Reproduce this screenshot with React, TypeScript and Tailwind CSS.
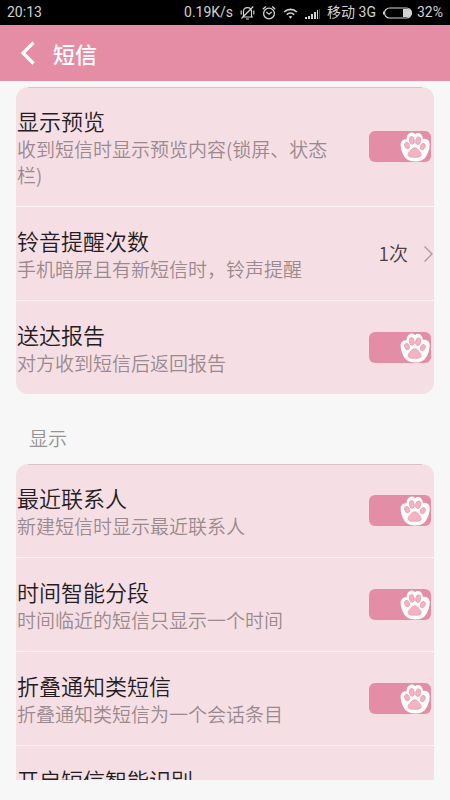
import { useId, useState } from "react";

type Item = {
  title: string;
  summary?: string;
  value?: string;
};

const notifyItems: Item[] = [
  { title: "显示预览", summary: "收到短信时显示预览内容(锁屏、状态栏)" },
  { title: "铃音提醒次数", summary: "手机暗屏且有新短信时，铃声提醒", value: "1次" },
  { title: "送达报告", summary: "对方收到短信后返回报告" },
];

const displayItems: Item[] = [
  { title: "最近联系人", summary: "新建短信时显示最近联系人" },
  { title: "时间智能分段", summary: "时间临近的短信只显示一个时间" },
  { title: "折叠通知类短信", summary: "折叠通知类短信为一个会话条目" },
  { title: "开启短信智能识别" },
];

function StatusBar() {
  return (
    <div className="flex h-[25px] shrink-0 items-center justify-between bg-black px-[7px] font-[Roboto,'Noto_Sans_CJK_SC',sans-serif] text-[14px] text-[#d2d2d2]">
      <span>20:13</span>
      <div className="flex items-center gap-[7px]">
        <span>0.19K/s</span>
        <svg width="15" height="16" viewBox="0 0 15 16" fill="none" stroke="currentColor" strokeWidth="1.2" aria-hidden="true">
          <path d="M2 12h11M3.500 12V6.500C3.500 4 5.100 2.600 7.500 2.600S11.500 4 11.500 6.500V12M6 14h3M13.300 1.500 1.500 13.500M13.800 5.500v4M1.200 5.500v4" />
        </svg>
        <svg width="14" height="16" viewBox="0 0 14 16" fill="none" stroke="currentColor" strokeWidth="1.3" aria-hidden="true">
          <circle cx="7" cy="8.500" r="5.400" />
          <path d="M4.300 7 7 9.200 9.800 7M.8 4.300 3.800 1.600M13.200 4.300l-3-2.700" />
        </svg>
        <svg width="15" height="12" viewBox="0 0 15 12" fill="none" stroke="currentColor" strokeWidth="1.700" aria-hidden="true">
          <path d="M1.200 5C4.800 1.400 10.200 1.400 13.800 5M3.800 7.600c2.100-2 5.300-2 7.400 0" />
          <path d="M5.600 9.600c1.200-.9 2.600-.9 3.800 0L7.500 11.700Z" fill="currentColor" stroke="none" />
        </svg>
        <svg width="15" height="12" viewBox="0 0 15 12" fill="currentColor" aria-hidden="true">
          <path d="M0 10h2v2H0zM3 9h2v3H3zM6 7h2v5H6zM9 5h2v7H9zM12 3h1v9h-1z" />
          <path d="M14 2h1v10h-1z" fill="#444" />
        </svg>
        <span>移动 3G</span>
        <div className="flex items-center gap-1">
          <svg width="30" height="12" viewBox="0 0 30 12" aria-hidden="true">
            <rect x="1.500" y="1" width="27" height="10" rx="5" fill="none" stroke="currentColor" strokeWidth="1.200" />
            <path d="M20 2h4.500a4 4 0 0 1 0 8H20z" fill="currentColor" />
            <path d="M0 4.500h1v3H0z" fill="currentColor" />
          </svg>
          <span>32%</span>
        </div>
      </div>
    </div>
  );
}

function Paw() {
  return (
    <svg className="pointer-events-none col-start-1 row-start-1 mr-px justify-self-end" width="30" height="30" viewBox="0 0 30 30" aria-hidden="true">
      <path
        d="M10.500.8C12.500.2 14 1 15 2.200 16.500.4 19.500.6 21.200 2.400c1.100 1.200 1.700 2.800 1.600 4.600 2.700-.7 5.200.2 6.300 2.600.9 2.200.7 4.800 0 7.400-.5 2.500-1.600 5-3.100 7.600-1.900 3.300-5.600 5-10.400 5-4.800 0-8.700-1.300-11-4.600C2.300 21.800.8 17.200.6 13 .5 9.300 3 6.700 6.600 7.200 6.400 4.200 7.800 1.700 10.500.8Z"
        fill="#fff"
      />
      <g fill="#f4b3c1" stroke="#e99fb2" strokeWidth=".8">
        <ellipse cx="11.800" cy="8.400" rx="2.500" ry="3.900" transform="rotate(-10 11.800 8.400)" />
        <ellipse cx="18.200" cy="8.700" rx="2.500" ry="3.900" transform="rotate(12 18.200 8.700)" />
        <ellipse cx="7" cy="13.600" rx="2.300" ry="3.300" transform="rotate(-22 7 13.600)" />
        <ellipse cx="22.800" cy="14.600" rx="2.300" ry="3.300" transform="rotate(26 22.800 14.600)" />
        <path d="M14.800 15.800c2.400 0 3.300 1.900 4.500 3.400 1.400 1.500 2.200 2.700 1.800 4-.6 2-3 2.100-6.300 2-3.500.1-6.100 0-6.700-2-.4-1.400.5-2.600 1.900-4 1.300-1.500 2.300-3.400 4.800-3.400Z" />
      </g>
    </svg>
  );
}

function RowText({ title, summary }: Item) {
  return (
    <span className="flex w-80 min-w-0 shrink flex-col text-left">
      <span className="text-[22px] leading-[31px] font-[350] text-[#241c1f]">{title}</span>
      {summary && (
        <span className="text-[19px] leading-[26px] font-[350] text-[#9a898f]">{summary}</span>
      )}
    </span>
  );
}

const rowClass =
  "flex w-full items-center justify-between border-b border-[#fcf3f5] py-[18px] pl-px last:border-b-0";

function SwitchRow({ item }: { item: Item }) {
  const id = useId();
  const [on, setOn] = useState(true);

  return (
    <label htmlFor={id} className={rowClass}>
      <RowText {...item} />
      <span className="mr-[3px] grid shrink-0 items-center">
        <input
          id={id}
          type="checkbox"
          checked={on}
          onChange={(e) => setOn(e.target.checked)}
          className="col-start-1 row-start-1 h-[31px] w-[62px] appearance-none rounded-md bg-[#d3c4c8] checked:bg-[#e48da6]"
        />
        <Paw />
      </span>
    </label>
  );
}

function LinkRow({ item }: { item: Item }) {
  return (
    <button type="button" className={rowClass}>
      <RowText {...item} />
      {item.value && (
        <span className="flex shrink-0 items-center gap-4 text-[19px] font-[350] text-[#4a3f43]">
          {item.value}
          <svg width="10" height="18" viewBox="0 0 10 18" fill="none" stroke="#a8999e" strokeWidth="1.300" aria-hidden="true">
            <path d="M.5 1.500 8 9 .5 16.500" />
          </svg>
        </span>
      )}
    </button>
  );
}

function Card({ items }: { items: Item[] }) {
  return (
    <div className="rounded-xl bg-[#f5dfe4]">
      <div className="-mb-px px-3">
        <hr className="border-[#d9c3c9]" />
      </div>
      <div>
        {items.map((item) =>
          item.summary && !item.value ? (
            <SwitchRow key={item.title} item={item} />
          ) : (
            <LinkRow key={item.title} item={item} />
          )
        )}
      </div>
    </div>
  );
}

export default function App() {
  return (
    <div className="flex h-screen flex-col bg-[#f7f7f7] font-['Noto_Sans_CJK_SC',sans-serif]">
      <StatusBar />
      <header className="flex h-14 shrink-0 items-center gap-[18px] bg-[#e48da5] px-5 text-white">
        <button type="button" aria-label="返回">
          <svg width="15" height="24" viewBox="0 0 15 24" fill="none" stroke="currentColor" strokeWidth="3.200" aria-hidden="true">
            <path d="M13.500 1.500 3 12l10.500 10.500" />
          </svg>
        </button>
        <h1 className="text-[22px] leading-[30px] font-medium">短信</h1>
      </header>
      <main className="mb-5 min-h-0 flex-1 overflow-hidden px-4 pt-[6px]">
        <Card items={notifyItems} />
        <h2 className="px-[13px] pt-[31px] pb-[13px] text-[19px] leading-[26px] font-[350] text-[#949494]">显示</h2>
        <Card items={displayItems} />
      </main>
    </div>
  );
}
